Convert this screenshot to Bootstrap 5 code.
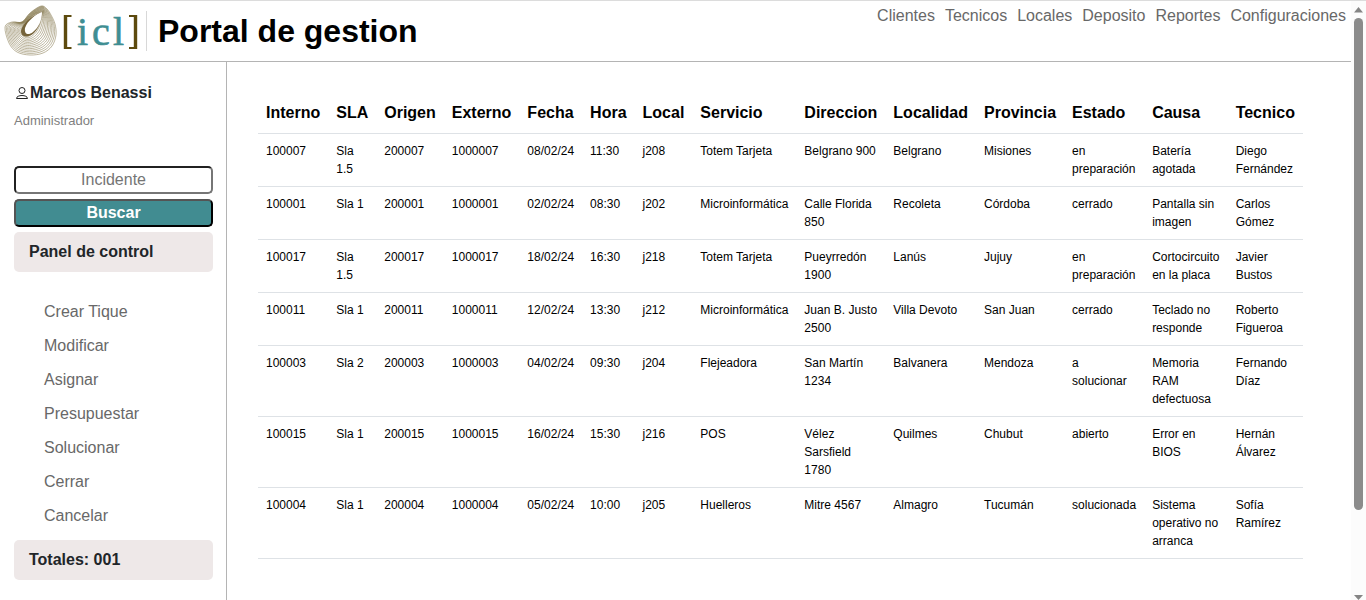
<!DOCTYPE html>
<html lang="es">
<head>
<meta charset="utf-8">
<meta name="viewport" content="width=device-width, initial-scale=1">
<title>Portal de gestion</title>
<link href="https://cdn.jsdelivr.net/npm/bootstrap@5.3.0/dist/css/bootstrap.min.css" rel="stylesheet">
<style>
  body { font-family: "Liberation Sans", Arial, sans-serif; background: #fff; }
  .shell { border-top: 1px solid #dcdcdc; }
  .topbar { border-bottom: 1px solid #b4b4b4; height: 61px; }
  .brand-title { font-size: 32px; font-weight: 700; line-height: 40px; color: #000; border-left: 1px solid #d8d8d8; padding-left: 11px; }
  .top-links { gap: 10px; padding: 3px 5px 0 0; }
  .muted-link { color: #686868; text-decoration: none; line-height: 24px; }
  .muted-link:hover { color: #222; }
  .side { width: 227px; border-right: 1px solid #b4b4b4; padding: 19px 13px 0 14px; }
  .role { font-size: 13px; line-height: 20px; color: #808080; padding-top: 6px; }
  .search { gap: 5px; margin-top: 35px; }
  .field { height: 28px; border-width: 2px; border-radius: 5px; line-height: 22px; padding: 0 4px; text-align: center; }
  input.field { border-style: inset; border-color: #767676; }
  input.field::placeholder { color: #757575; }
  button.field { border-style: outset; border-color: #000; background: #418c91; color: #fff; font-weight: 700; }
  .strip { background: #eee8e8; border-radius: 5px; height: 40px; line-height: 40px; font-size: 16px; font-weight: 700; padding-left: 15px; }
  .menu { padding: 23px 0 7px 30px; }
  .menu .muted-link { display: block; line-height: 34px; }
  .content-area { padding: 31px 48px 0 31px; }
  .incidents { --bs-table-color: #000; --bs-table-bg: transparent; color: #000; border-color: #dee2e6; }
  .incidents td { font-size: 12px; line-height: 18px; }
  .incidents th { line-height: 24px; }
  .rail { width: 15px; background: #fcfcfc; padding: 6px 0 0; }
  .thumb { width: 9px; height: 83%; border-radius: 5px; background: #8b8b8b; }
</style>
</head>
<body>
<div class="shell d-flex vh-100 overflow-hidden">
  <div class="d-flex flex-column flex-grow-1">
    <header class="topbar d-flex justify-content-between flex-shrink-0">
      <div class="d-flex align-items-center">
        <svg width="146" height="60" viewBox="0 1 146 60" role="img" aria-label="icl">
          <g id="shell-lines" fill="none" stroke="#86794f" stroke-width=".55"></g>
          <path d="M42 12C34 14 22 23 21 31C21 38 29 38 34 33C39 28 42 20 42 12Z" fill="#75633a"/>
          <path d="M42 12C36 14 27 21 25 28C24 34 28 36 33 32C39 27 42 20 42 12Z" fill="#fff"/>
          <g fill="none" stroke="#5d4a0e"><path d="M65.500 15V49M135.500 15V49" stroke-width="3.400"/><path d="M65 16H71.500M65 48H71.500M129 16H136M129 48H136" stroke-width="2"/></g>
          <text x="77 92 113" y="45" font-family="Liberation Serif, serif" font-size="40" fill="#3f8e92" stroke="#3f8e92" stroke-width=".6">icl</text>
        </svg>
        <h1 class="brand-title mb-0">Portal de gestion</h1>
      </div>
      <nav class="top-links d-flex align-items-start">
        <a class="muted-link" href="#">Clientes</a>
        <a class="muted-link" href="#">Tecnicos</a>
        <a class="muted-link" href="#">Locales</a>
        <a class="muted-link" href="#">Deposito</a>
        <a class="muted-link" href="#">Reportes</a>
        <a class="muted-link" href="#">Configuraciones</a>
      </nav>
    </header>
    <div class="d-flex flex-grow-1">
      <aside class="side flex-shrink-0">
        <div class="d-flex align-items-center fw-bold">
          <svg width="16" height="14" viewBox="0 0 16 14" fill="none" stroke="#222" stroke-width="1" aria-hidden="true"><circle cx="8" cy="4.500" r="3"/><path d="M2.500 12.500C2.500 8.500 13.500 8.500 13.500 12.500Z" stroke-linejoin="round"/></svg>
          <span>Marcos Benassi</span>
        </div>
        <div class="role">Administrador</div>
        <form class="search d-flex flex-column">
          <input class="field w-100" type="text" placeholder="Incidente" aria-label="Incidente">
          <button class="field w-100" type="button">Buscar</button>
          <h2 class="strip mb-0">Panel de control</h2>
        </form>
        <nav class="menu">
          <a class="muted-link" href="#">Crear Tique</a>
          <a class="muted-link" href="#">Modificar</a>
          <a class="muted-link" href="#">Asignar</a>
          <a class="muted-link" href="#">Presupuestar</a>
          <a class="muted-link" href="#">Solucionar</a>
          <a class="muted-link" href="#">Cerrar</a>
          <a class="muted-link" href="#">Cancelar</a>
        </nav>
        <div class="strip">Totales: 001</div>
      </aside>
      <main class="content-area flex-grow-1">
        <table class="table incidents mb-0">
          <thead><tr><th>Interno</th><th>SLA</th><th>Origen</th><th>Externo</th><th>Fecha</th><th>Hora</th><th>Local</th><th>Servicio</th><th>Direccion</th><th>Localidad</th><th>Provincia</th><th>Estado</th><th>Causa</th><th>Tecnico</th></tr></thead>
          <tbody>
            <tr><td>100007</td><td>Sla 1.5</td><td>200007</td><td>1000007</td><td>08/02/24</td><td>11:30</td><td>j208</td><td>Totem Tarjeta</td><td>Belgrano 900</td><td>Belgrano</td><td>Misiones</td><td>en preparación</td><td>Batería agotada</td><td>Diego Fernández</td></tr>
            <tr><td>100001</td><td>Sla 1</td><td>200001</td><td>1000001</td><td>02/02/24</td><td>08:30</td><td>j202</td><td>Microinformática</td><td>Calle Florida 850</td><td>Recoleta</td><td>Córdoba</td><td>cerrado</td><td>Pantalla sin imagen</td><td>Carlos Gómez</td></tr>
            <tr><td>100017</td><td>Sla 1.5</td><td>200017</td><td>1000017</td><td>18/02/24</td><td>16:30</td><td>j218</td><td>Totem Tarjeta</td><td>Pueyrredón 1900</td><td>Lanús</td><td>Jujuy</td><td>en preparación</td><td>Cortocircuito en la placa</td><td>Javier Bustos</td></tr>
            <tr><td>100011</td><td>Sla 1</td><td>200011</td><td>1000011</td><td>12/02/24</td><td>13:30</td><td>j212</td><td>Microinformática</td><td>Juan B. Justo 2500</td><td>Villa Devoto</td><td>San Juan</td><td>cerrado</td><td>Teclado no responde</td><td>Roberto Figueroa</td></tr>
            <tr><td>100003</td><td>Sla 2</td><td>200003</td><td>1000003</td><td>04/02/24</td><td>09:30</td><td>j204</td><td>Flejeadora</td><td>San Martín 1234</td><td>Balvanera</td><td>Mendoza</td><td>a solucionar</td><td>Memoria RAM defectuosa</td><td>Fernando Díaz</td></tr>
            <tr><td>100015</td><td>Sla 1</td><td>200015</td><td>1000015</td><td>16/02/24</td><td>15:30</td><td>j216</td><td>POS</td><td>Vélez Sarsfield 1780</td><td>Quilmes</td><td>Chubut</td><td>abierto</td><td>Error en BIOS</td><td>Hernán Álvarez</td></tr>
            <tr><td>100004</td><td>Sla 1</td><td>200004</td><td>1000004</td><td>05/02/24</td><td>10:00</td><td>j205</td><td>Huelleros</td><td>Mitre 4567</td><td>Almagro</td><td>Tucumán</td><td>solucionada</td><td>Sistema operativo no arranca</td><td>Sofía Ramírez</td></tr>
          </tbody>
        </table>
      </main>
    </div>
  </div>
  <div class="rail d-flex flex-column align-items-center flex-shrink-0" aria-hidden="true">
    <svg class="flex-shrink-0 mb-1" width="9" height="7" viewBox="0 0 9 7"><path d="M0 5.500L4.500 0L9 5.500Z" fill="#858585"/></svg>
    <div class="thumb"></div>
    <svg class="mt-auto flex-shrink-0" width="9" height="5" viewBox="0 0 9 5"><path d="M0 0H9L4.500 5Z" fill="#858585"/></svg>
  </div>
</div>
<script src="https://cdn.jsdelivr.net/npm/bootstrap@5.3.0/dist/js/bootstrap.bundle.min.js"></script>
<script>
  // The shell mark: contour lines blended from the outer rim to the opening.
  const rim = [[41,6],[47,9],[51,15],[55,24],[56,35],[52,46],[43,53],[30,55],[17,52],[9,43],[5,27],[12,22],[22,22],[30,13]];
  const hole = [[42,12],[42,14],[41,17],[40,20],[38,25],[36,29],[33,33],[29,36],[26,36],[23,34],[21,31],[22,28],[26,22],[34,15]];
  const n = rim.length;
  let marks = '';
  for (let k = 0; k <= 12; k++) {
    const t = k / 12;
    const p = rim.map((r, i) => [r[0] + (hole[i][0] - r[0]) * t, r[1] + (hole[i][1] - r[1]) * t]);
    let d = `M${p[0]}`;
    for (let i = 0; i < n; i++) {
      const a = p[(i + n - 1) % n], b = p[i], c = p[(i + 1) % n], e = p[(i + 2) % n];
      d += `C${b[0] + (c[0] - a[0]) / 6},${b[1] + (c[1] - a[1]) / 6} ${c[0] - (e[0] - b[0]) / 6},${c[1] - (e[1] - b[1]) / 6} ${c[0]},${c[1]}`;
    }
    marks += `<path d="${d}Z"/>`;
  }
  document.getElementById('shell-lines').innerHTML = marks;
</script>
</body>
</html>
